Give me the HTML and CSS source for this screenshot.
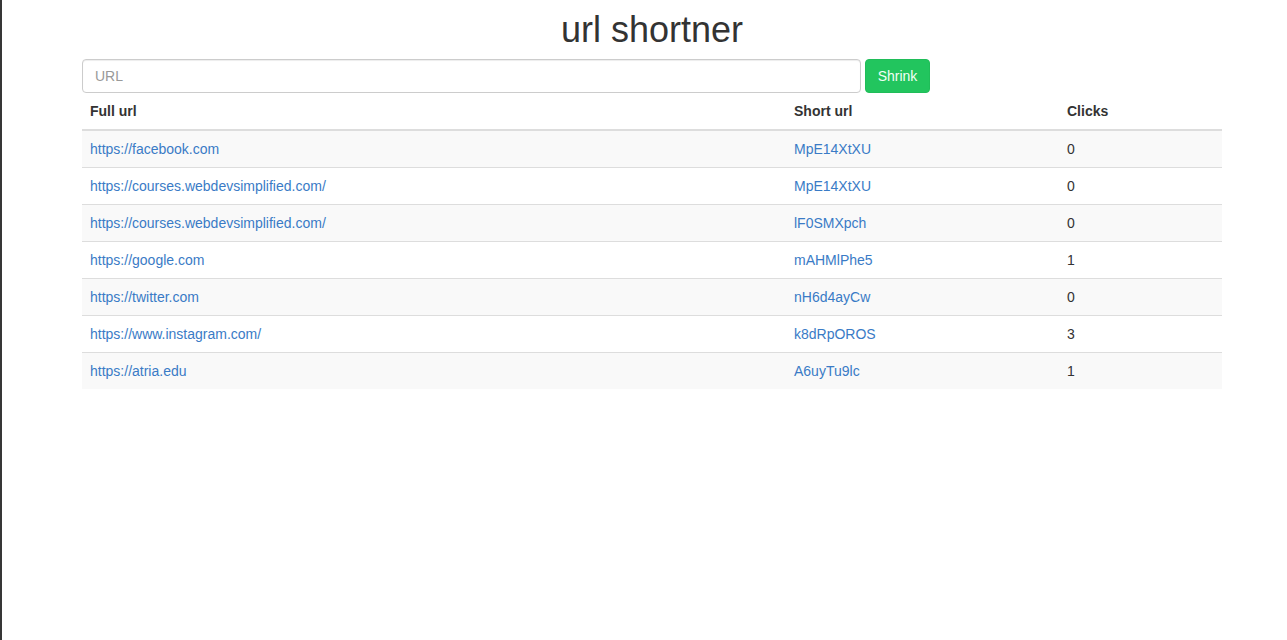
FILE: index.html
```html
<!DOCTYPE html>
<html lang="en">
<head>
<meta charset="utf-8">
<title>url shortner</title>
<link rel="stylesheet" href="styles.css">
</head>
<body>
<div class="container">
  <h1 class="title">url shortner</h1>
  <form class="shrink-form">
    <input class="url-input" type="url" placeholder="URL">
    <button class="btn-shrink" type="button">Shrink</button>
  </form>
  <table class="table">
    <thead>
      <tr><th class="col-full">Full url</th><th class="col-short">Short url</th><th class="col-clicks">Clicks</th></tr>
    </thead>
    <tbody>
      <tr><td><a href="#">https://facebook.com</a></td><td><a href="#">MpE14XtXU</a></td><td>0</td></tr>
      <tr><td><a href="#">https://courses.webdevsimplified.com/</a></td><td><a href="#">MpE14XtXU</a></td><td>0</td></tr>
      <tr><td><a href="#">https://courses.webdevsimplified.com/</a></td><td><a href="#">lF0SMXpch</a></td><td>0</td></tr>
      <tr><td><a href="#">https://google.com</a></td><td><a href="#">mAHMlPhe5</a></td><td>1</td></tr>
      <tr><td><a href="#">https://twitter.com</a></td><td><a href="#">nH6d4ayCw</a></td><td>0</td></tr>
      <tr><td><a href="#">https://www.instagram.com/</a></td><td><a href="#">k8dRpOROS</a></td><td>3</td></tr>
      <tr><td><a href="#">https://atria.edu</a></td><td><a href="#">A6uyTu9lc</a></td><td>1</td></tr>
    </tbody>
  </table>
</div>
</body>
</html>
```

FILE: styles.css
```css
html, body {
  margin: 0;
  padding: 0;
  height: 100%;
}
body {
  font-family: "Liberation Sans", Arial, Helvetica, sans-serif;
  font-size: 14px;
  line-height: 1.42857;
  color: #333;
  background: #fff;
  border-left: 2px solid #363636;
  box-sizing: border-box;
}
.container {
  width: 1140px;
  margin-left: 80px;
}
.title {
  font-size: 36px;
  font-weight: 400;
  line-height: 1.1;
  text-align: center;
  margin: 10px 0 9px;
  color: #333;
}
.shrink-form {
  display: flex;
  gap: 4px;
  margin: 0;
}
.url-input {
  width: 779px;
  height: 34px;
  box-sizing: border-box;
  padding: 6px 12px;
  font-family: inherit;
  font-size: 14px;
  color: #555;
  border: 1px solid #ccc;
  border-radius: 4px;
  box-shadow: inset 0 1px 1px rgba(0,0,0,.075);
  outline: none;
}
.url-input::placeholder {
  color: #999;
}
.btn-shrink {
  width: 65px;
  height: 34px;
  box-sizing: border-box;
  padding: 6px 0;
  font-family: inherit;
  font-size: 14px;
  color: #f2fff5;
  background: #22c55e;
  border: 1px solid #20bd59;
  border-radius: 4px;
}
.table {
  width: 100%;
  border-collapse: collapse;
  border-spacing: 0;
}
.table th {
  text-align: left;
  font-weight: 700;
  padding: 8px;
  line-height: 20px;
  border-bottom: 2px solid #ddd;
  vertical-align: bottom;
}
.table td {
  padding: 8px;
  line-height: 20px;
  border-top: 1px solid #ddd;
}
.table tbody tr:first-child td {
  border-top: 0;
}
.table tbody tr:nth-child(odd) {
  background: #f9f9f9;
}
.col-full { width: 688px; }
.col-short { width: 257px; }
.table a {
  color: #3a7bc6;
  text-decoration: none;
}
```
